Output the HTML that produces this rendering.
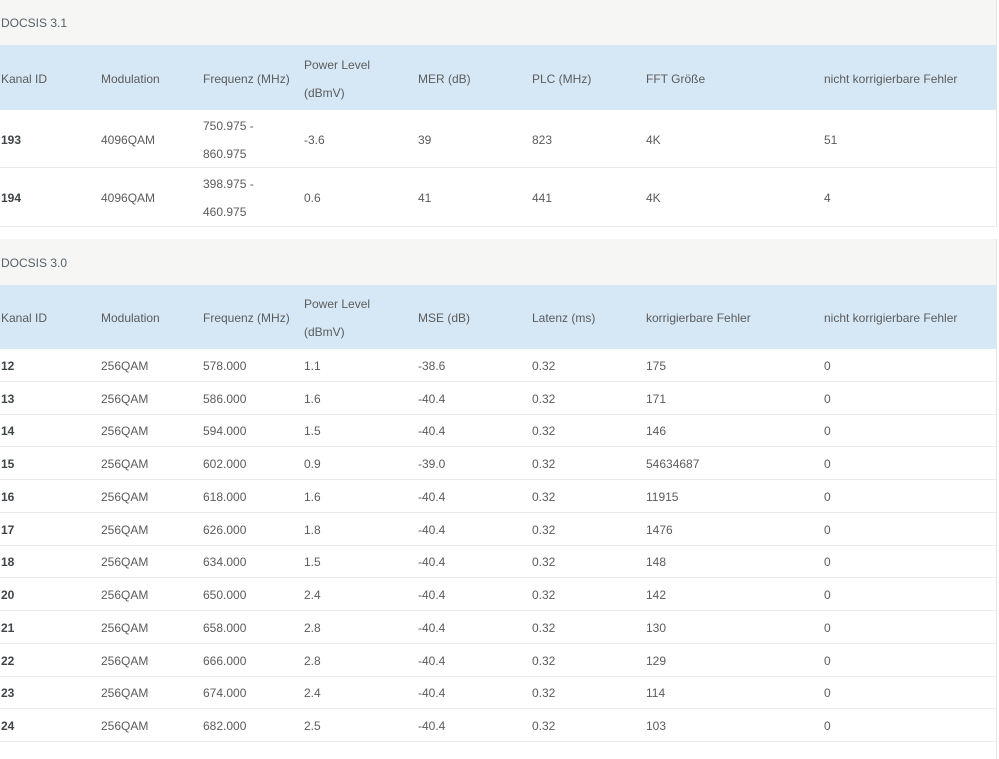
<!DOCTYPE html>
<html><head><meta charset="utf-8"><style>
*{margin:0;padding:0;box-sizing:border-box}
body{width:999px;height:742px;overflow:hidden;background:#fff;font-family:"Liberation Sans",sans-serif;font-size:12px;color:#5b5b5b;position:relative}
.sec{position:absolute;left:0;width:997px;border-right:1px solid #e6e6e6}
.title{background:#f6f6f4;padding-left:1px;padding-top:1px;display:flex;align-items:center;color:#56606a}
.row{display:flex;align-items:center;position:relative;border-bottom:1px solid #ebebeb;padding-top:2px}
.head{background:#d6e8f6;border-bottom:none}
.c{position:absolute;line-height:28px}
.b{font-weight:bold;color:#3f4446}
</style></head><body>
<div class="sec" style="top:0;height:227px">
 <div class="title" style="height:45px">DOCSIS 3.1</div>
 <div class="row head" style="height:65px">
  <span class="c" style="left:1px">Kanal ID</span><span class="c" style="left:101px">Modulation</span><span class="c" style="left:203px">Frequenz (MHz)</span><span class="c" style="left:304px">Power Level<br>(dBmV)</span><span class="c" style="left:418px">MER (dB)</span><span class="c" style="left:532px">PLC (MHz)</span><span class="c" style="left:646px">FFT Größe</span><span class="c" style="left:824px">nicht korrigierbare Fehler</span>
 </div>
 <div class="row" style="height:58px">
  <span class="c b" style="left:1px">193</span><span class="c" style="left:101px">4096QAM</span><span class="c" style="left:203px">750.975 -<br>860.975</span><span class="c" style="left:304px">-3.6</span><span class="c" style="left:418px">39</span><span class="c" style="left:532px">823</span><span class="c" style="left:646px">4K</span><span class="c" style="left:824px">51</span>
 </div>
 <div class="row" style="height:59px">
  <span class="c b" style="left:1px">194</span><span class="c" style="left:101px">4096QAM</span><span class="c" style="left:203px">398.975 -<br>460.975</span><span class="c" style="left:304px">0.6</span><span class="c" style="left:418px">41</span><span class="c" style="left:532px">441</span><span class="c" style="left:646px">4K</span><span class="c" style="left:824px">4</span>
 </div>
</div>
<div class="sec" style="top:239px;height:520px">
 <div class="title" style="height:46px">DOCSIS 3.0</div>
 <div class="row head" style="height:64px">
  <span class="c" style="left:1px">Kanal ID</span><span class="c" style="left:101px">Modulation</span><span class="c" style="left:203px">Frequenz (MHz)</span><span class="c" style="left:304px">Power Level<br>(dBmV)</span><span class="c" style="left:418px">MSE (dB)</span><span class="c" style="left:532px">Latenz (ms)</span><span class="c" style="left:646px">korrigierbare Fehler</span><span class="c" style="left:824px">nicht korrigierbare Fehler</span>
 </div>
 <div id="rows"></div>
</div>
<script>
var d=[["12","578.000","1.1","-38.6","175"],["13","586.000","1.6","-40.4","171"],["14","594.000","1.5","-40.4","146"],["15","602.000","0.9","-39.0","54634687"],["16","618.000","1.6","-40.4","11915"],["17","626.000","1.8","-40.4","1476"],["18","634.000","1.5","-40.4","148"],["20","650.000","2.4","-40.4","142"],["21","658.000","2.8","-40.4","130"],["22","666.000","2.8","-40.4","129"],["23","674.000","2.4","-40.4","114"],["24","682.000","2.5","-40.4","103"]];
var h="";d.forEach(function(r){h+='<div class="row" style="height:32.75px"><span class="c b" style="left:1px">'+r[0]+'</span><span class="c" style="left:101px">256QAM</span><span class="c" style="left:203px">'+r[1]+'</span><span class="c" style="left:304px">'+r[2]+'</span><span class="c" style="left:418px">'+r[3]+'</span><span class="c" style="left:532px">0.32</span><span class="c" style="left:646px">'+r[4]+'</span><span class="c" style="left:824px">0</span></div>';});
document.getElementById("rows").innerHTML=h;
</script>
</body></html>
